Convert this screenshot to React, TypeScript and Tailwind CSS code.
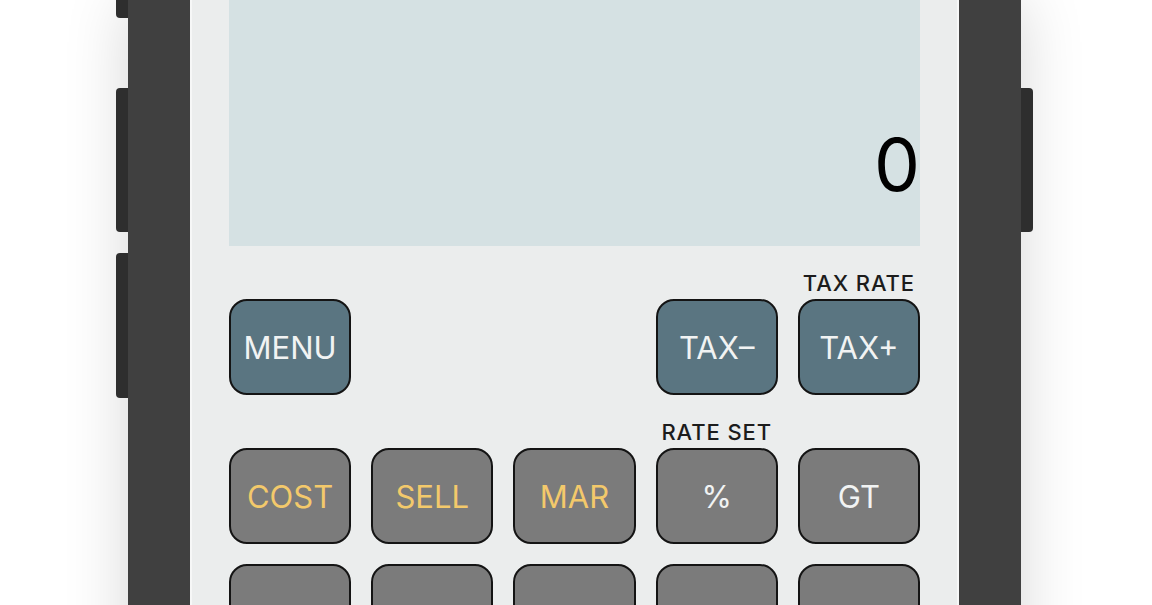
import React from "react";

type Btn = { text?: string; label?: string; kind?: "blue" | "gray" | "none"; yellow?: boolean };

const row1: Btn[] = [
  { text: "MENU", kind: "blue" },
  { kind: "none" },
  { kind: "none" },
  { text: "TAX\u2013", kind: "blue" },
  { text: "TAX+", kind: "blue", label: "TAX RATE" },
];

const row2: Btn[] = [
  { text: "COST", kind: "gray", yellow: true },
  { text: "SELL", kind: "gray", yellow: true },
  { text: "MAR", kind: "gray", yellow: true },
  { text: "%", kind: "gray", label: "RATE SET" },
  { text: "GT", kind: "gray" },
];

const row3: Btn[] = [
  { kind: "gray" },
  { kind: "gray" },
  { kind: "gray" },
  { kind: "gray" },
  { kind: "gray" },
];

function Key({ b }: { b: Btn }) {
  if (b.kind === "none") return <div className="h-[96px]" />;
  const bg = b.kind === "blue" ? "bg-[#5a7581]" : "bg-[#7b7b7b]";
  const color = b.yellow ? "text-[#f3c96b]" : "text-[#f1f3f3]";
  return (
    <div
      className={`h-[96px] w-full rounded-[18px] border-2 border-[#141414] ${bg} ${color} flex items-center justify-center text-[31px] leading-none font-normal`}
    >
      {b.text}
    </div>
  );
}

function Row({ items, labels }: { items: Btn[]; labels: boolean }) {
  return (
    <div className={`grid grid-cols-5 gap-x-[20px] ${labels ? "mt-[24px]" : "mt-[20px]"}`}>
      {items.map((b, i) => (
        <div key={i} className="flex flex-col items-center">
          {labels && (
            <div className="h-[26px] mb-[3px] text-[22px] leading-[26px] font-medium text-[#1c1c1c] tracking-[0.9px] whitespace-nowrap">
              {b.label ?? ""}
            </div>
          )}
          <Key b={b} />
        </div>
      ))}
    </div>
  );
}

export default function App() {
  return (
    <div
      className="w-[1152px] h-[605px] overflow-hidden bg-white"
      style={{ fontFamily: "Inter, 'Liberation Sans', Arial, sans-serif" }}
    >
      <div className="relative ml-[128px] w-[893px] h-[800px] bg-[#404040] px-[62px] shadow-[0_0_60px_rgba(0,0,0,0.16)]">
        {/* side buttons */}
        <div className="absolute left-[-12px] top-[-40px] w-[12px] h-[58px] rounded-l-[4px] bg-[#2e2e2e]" />
        <div className="absolute left-[-12px] top-[88px] w-[12px] h-[144px] rounded-l-[4px] bg-[#2e2e2e]" />
        <div className="absolute left-[-12px] top-[253px] w-[12px] h-[145px] rounded-l-[4px] bg-[#2e2e2e]" />
        <div className="absolute right-[-12px] top-[88px] w-[12px] h-[144px] rounded-r-[4px] bg-[#2e2e2e]" />

        <div className="h-full bg-[#ebeded] border-x-2 border-[#f6f7f7] px-[37px]">
          <div className="h-[246px] bg-[#d5e1e3] flex items-end justify-end pb-[45px]">
            <span className="text-[73px] leading-none text-black">0</span>
          </div>
          <Row items={row1} labels />
          <Row items={row2} labels />
          <Row items={row3} labels={false} />
        </div>
      </div>
    </div>
  );
}
